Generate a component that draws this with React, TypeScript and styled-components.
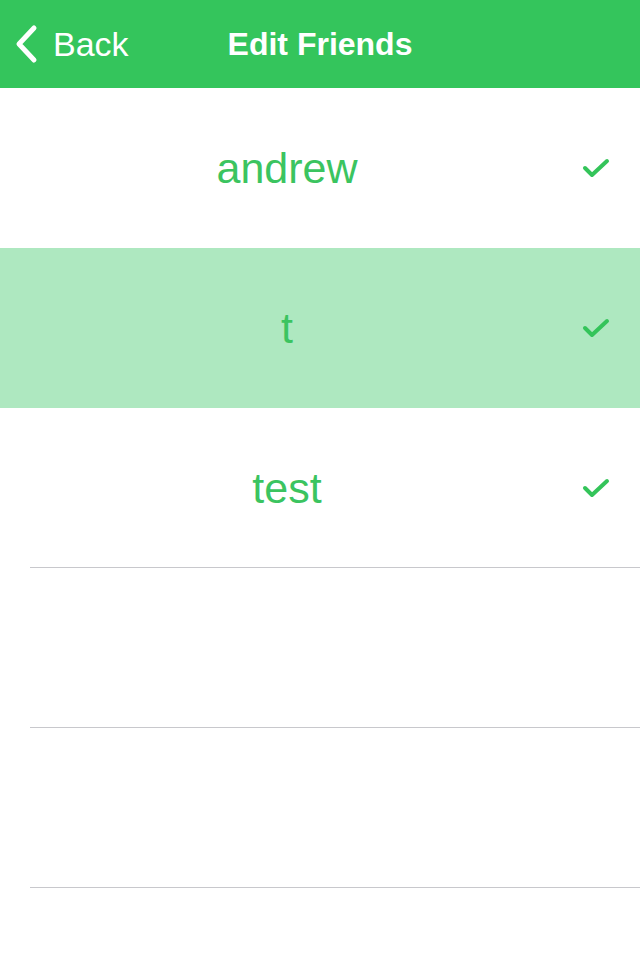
import styled, { createGlobalStyle } from "styled-components";

const friends = [
  { name: "andrew", selected: false, divider: false },
  { name: "t", selected: true, divider: false },
  { name: "test", selected: false, divider: true },
];

const App = () => {
  return (
    <Screen>
      <GlobalStyle />
      <NavBar>
        <BackButton>
          <svg width="26" height="40" viewBox="0 0 26 40">
            <path d="M20 4 L5 20 L20 36" fill="none" stroke="#fff" strokeWidth="5" strokeLinecap="round" strokeLinejoin="round" />
          </svg>
          <span>Back</span>
        </BackButton>
        <NavTitle>Edit Friends</NavTitle>
      </NavBar>
      <List>
        {friends.map((friend) => (
          <Row key={friend.name} $selected={friend.selected} $divider={friend.divider}>
            <Name>{friend.name}</Name>
            <Check>
              <svg width="28" height="22" viewBox="0 0 28 22">
                <path d="M3 11 L10 18 L25 4" fill="none" stroke="#34c45a" strokeWidth="4" strokeLinecap="round" strokeLinejoin="round" />
              </svg>
            </Check>
          </Row>
        ))}
        <Row $selected={false} $divider />
        <Row $selected={false} $divider />
      </List>
    </Screen>
  );
};

export default App;

const GlobalStyle = createGlobalStyle`
  body {
    margin: 0;
    background: #fff;
    font-family: "Liberation Sans", Arial, sans-serif;
  }
`;

const Screen = styled.div`
  width: 640px;
  height: 960px;
  overflow: hidden;
  background: #fff;
`;

const NavBar = styled.div`
  height: 88px;
  background: #34c55c;
  border-bottom: 1px solid #d4e6d8;
  display: flex;
  align-items: center;
  position: relative;
`;

const BackButton = styled.div`
  display: flex;
  align-items: center;
  gap: 13px;
  padding-left: 14px;
  color: #fff;
  font-size: 34px;
`;

const NavTitle = styled.div`
  position: absolute;
  inset: 0;
  line-height: 88px;
  text-align: center;
  color: #fff;
  font-size: 32px;
  font-weight: bold;
  pointer-events: none;
`;

const List = styled.div`
  display: flex;
  flex-direction: column;
  margin-top: -1px;
`;

const Row = styled.div<{ $selected: boolean; $divider: boolean }>`
  height: 160px;
  flex-shrink: 0;
  display: flex;
  align-items: center;
  position: relative;
  background: ${(p) => (p.$selected ? "#aee8c0" : "#fff")};

  &::after {
    content: "";
    display: ${(p) => (p.$divider ? "block" : "none")};
    position: absolute;
    left: 30px;
    right: 0;
    bottom: 0;
    height: 1px;
    background: #c8c8cc;
  }
`;

const Name = styled.div`
  width: 574px;
  text-align: center;
  color: #3bc460;
  font-size: 43px;
`;

const Check = styled.div`
  width: 66px;
  display: flex;
  padding-left: 8px;
  box-sizing: border-box;
`;
